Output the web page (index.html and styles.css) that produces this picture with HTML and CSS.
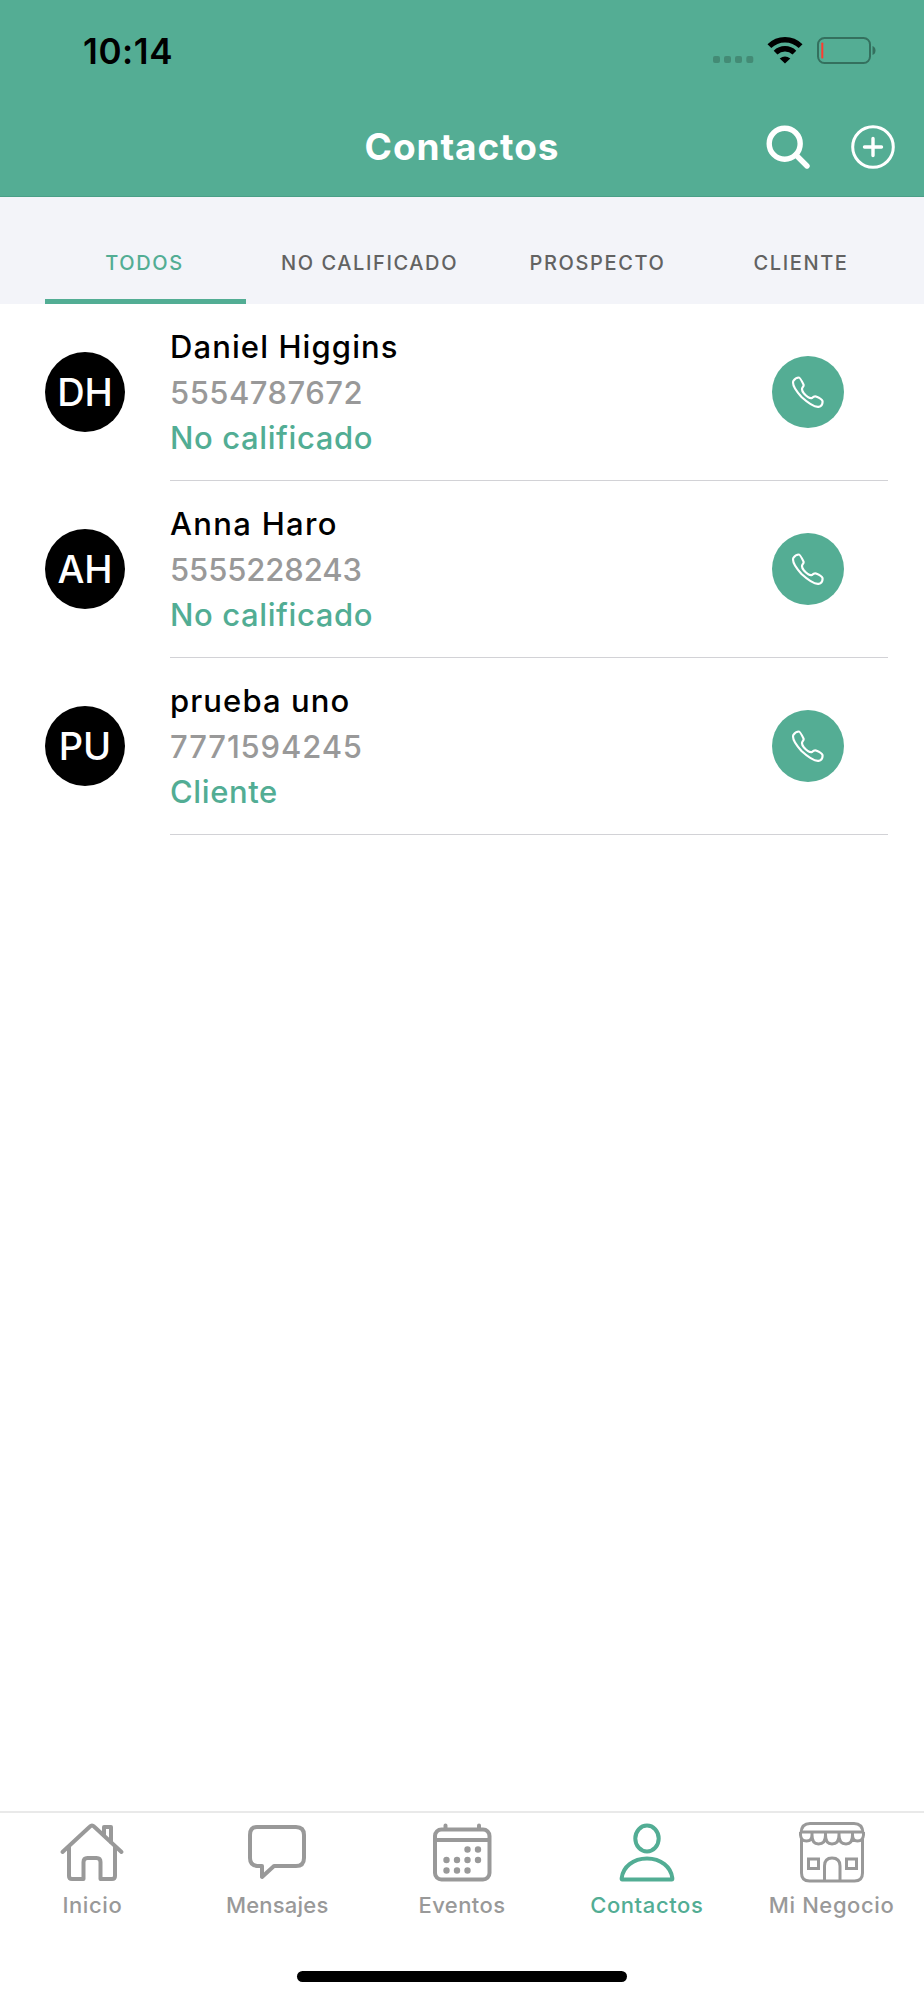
FILE: index.html
```
<!DOCTYPE html>
<html lang="es">
<head>
    <meta charset="UTF-8">
    <meta name="viewport" content="width=device-width, initial-scale=1.0">
    <title>Contactos</title>
    <link rel="stylesheet" href="styles.css">
</head>
<body>
    <header class="header">
        <div class="status-bar">
            <span class="time">10:14</span>
            <svg class="status-icons" width="168" height="32" viewBox="0 0 168 32">
                <g fill="#438b75">
                    <rect x="1" y="22" width="7" height="7" rx="2"/>
                    <rect x="12" y="22" width="7" height="7" rx="2"/>
                    <rect x="23" y="22" width="7" height="7" rx="2"/>
                    <rect x="34.300" y="22" width="7" height="7" rx="2"/>
                </g>
                <g fill="none" stroke="#000" stroke-width="5.400">
                    <path d="M57.400 12.200 A22 22 0 0 1 88.600 12.200"/>
                    <path d="M63.600 18.600 A13.500 13.500 0 0 1 82.400 18.600"/>
                </g>
                <path d="M67.700 24.600 Q73 20.500 78.300 24.600 L73 29.500Z"/>
                <rect x="106" y="4" width="52" height="25" rx="6.500" fill="none" stroke="#34705e" stroke-width="2"/>
                <rect x="109.300" y="8.500" width="2" height="16" rx="0.800" fill="#ff3b30"/>
                <path d="M160.500 12 Q163.500 13 163.500 16.500 Q163.500 20 160.500 21Z" fill="#34705e"/>
            </svg>
        </div>
        <div class="nav-bar">
            <h1 class="title">Contactos</h1>
            <div class="actions">
                <svg width="44" height="44" viewBox="0 0 44 44" fill="none" stroke="#fff" stroke-linecap="round">
                    <circle cx="18.700" cy="18.700" r="15.500" stroke-width="5.400"/>
                    <path d="M30 30 L41 41" stroke-width="5.400"/>
                </svg>
                <svg width="44" height="44" viewBox="0 0 44 44" fill="none" stroke="#fff" stroke-linecap="round">
                    <circle cx="22" cy="22" r="20.300" stroke-width="3"/>
                    <path d="M22 13.500 V30.500 M13.500 22 H30.500" stroke-width="3.400"/>
                </svg>
            </div>
        </div>
    </header>

    <nav class="tabs">
        <a class="tab active">TODOS</a>
        <a class="tab">NO CALIFICADO</a>
        <a class="tab">PROSPECTO</a>
        <a class="tab">CLIENTE</a>
    </nav>

    <main class="contacts">
        <div class="contact">
            <div class="avatar">DH</div>
            <div class="info">
                <div class="details">
                    <div class="name">Daniel Higgins</div>
                    <div class="phone">5554787672</div>
                    <div class="state">No calificado</div>
                </div>
                <a class="call"><svg width="34" height="34"><use href="#icon-phone"/></svg></a>
            </div>
        </div>
        <div class="contact">
            <div class="avatar">AH</div>
            <div class="info">
                <div class="details">
                    <div class="name name-anna">Anna Haro</div>
                    <div class="phone phone-anna">5555228243</div>
                    <div class="state">No calificado</div>
                </div>
                <a class="call"><svg width="34" height="34"><use href="#icon-phone"/></svg></a>
            </div>
        </div>
        <div class="contact">
            <div class="avatar">PU</div>
            <div class="info">
                <div class="details">
                    <div class="name">prueba uno</div>
                    <div class="phone phone-prueba">7771594245</div>
                    <div class="state">Cliente</div>
                </div>
                <a class="call"><svg width="34" height="34"><use href="#icon-phone"/></svg></a>
            </div>
        </div>
    </main>

    <footer class="bottom-bar">
        <a class="item">
            <svg width="66" height="62" viewBox="0 0 66 62" fill="none" stroke="#999" stroke-width="4" stroke-linecap="round" stroke-linejoin="round">
                <path d="M3.500 31 L31 5.500 Q33 3.500 35 5.500 L62.500 31"/>
                <path d="M45 14 V6 H52 V21"/>
                <path d="M10 26 V55 Q10 58 13 58 H24.500 V41 Q24.500 37 28.500 37 H37.500 Q41.500 37 41.500 41 V58 H53 Q56 58 56 55 V26"/>
            </svg>
            <span>Inicio</span>
        </a>
        <a class="item">
            <svg width="66" height="62" viewBox="0 0 66 62" fill="none" stroke="#999" stroke-width="4" stroke-linecap="round" stroke-linejoin="round">
                <path d="M13 6 H52 Q60 6 60 14 V37 Q60 45 52 45 H30 L18 56 V45 H13 Q6 44 6 37 V14 Q6 6 13 6Z"/>
            </svg>
            <span class="label-mensajes">Mensajes</span>
        </a>
        <a class="item">
            <svg width="66" height="62" viewBox="0 0 66 62" fill="none" stroke="#999" stroke-width="4" stroke-linecap="round">
                <rect x="6" y="8.500" width="54.500" height="50" rx="6.500"/>
                <path d="M6 19 H60 M16.500 8 V4.500 M50 8 V4.500"/>
                <path stroke-width="6.400" d="M38.500 28.500 h0 M49 28.500 h0 M17.500 39 h0 M28 39 h0 M38.500 39 h0 M49 39 h0 M17.500 49.500 h0 M28 49.500 h0 M38.500 49.500 h0"/>
            </svg>
            <span class="label-eventos">Eventos</span>
        </a>
        <a class="item active">
            <svg width="66" height="62" viewBox="0 0 66 62" fill="none" stroke="#52ad94" stroke-width="4" stroke-linejoin="round">
                <ellipse cx="33" cy="17.500" rx="11.700" ry="13"/>
                <path d="M8 58.500 Q7.500 58.500 7.700 57 C9 46 19 37.500 33 37.500 C47 37.500 57 46 58.300 57 Q58.500 58.500 58 58.500Z"/>
            </svg>
            <span>Contactos</span>
        </a>
        <a class="item">
            <svg width="66" height="62" viewBox="0 0 66 62" fill="none" stroke="#999" stroke-width="3">
                <path d="M2 12 Q2.500 2.500 11 2.500 H55 Q63.500 2.500 64 12"/>
                <path d="M1.500 11 H64.500"/>
                <path d="M1.500 11 V14 Q2 20 7.500 20 Q13 20 13 14 V11 M13 14 Q13 23 19.500 23 Q26.500 23 26.500 14 V11 M26.500 14 Q26.500 23 33 23 Q40 23 40 14 V11 M40 14 Q40 23 47 23 Q53.500 23 53.500 14 V11 M53.500 14 Q53.500 20 58.500 20 Q64 20 64.500 14 V11"/>
                <path d="M2.500 18 V52 Q2.500 60 10.500 60 H55.500 Q63.500 60 63.500 52 V18"/>
                <path d="M25.500 60 V45 Q25.500 37 33 37 Q41 37 41 45 V60"/>
                <rect x="9.500" y="38" width="10" height="9.500"/>
                <rect x="47.500" y="38" width="10" height="9.500"/>
            </svg>
            <span>Mi Negocio</span>
        </a>
        <div class="home-indicator"></div>
    </footer>

    <svg class="sprite" width="0" height="0">
        <symbol id="icon-phone" viewBox="0 0 34 34">
            <path d="M2.300 6 Q4.500 2.500 8 2.500 Q9 2.500 12.500 9.500 Q13 11 11.500 12.500 Q10 15 13 18.500 Q18 24 21 23 Q23 21 25 21.500 Q31 24 31.500 26 Q32 31 27.500 31.800 Q22 32.500 10.500 22 Q0.500 11 2.300 6Z" fill="none" stroke="#fff" stroke-width="2.200" stroke-linejoin="round"/>
        </symbol>
    </svg>
</body>
</html>
```
FILE: styles.css
```
* {
    box-sizing: border-box;
}
body {
    margin: 0;
    height: 2000px;
    display: flex;
    flex-direction: column;
    background-color: #fff;
    font-family: Inter, "Liberation Sans", sans-serif;
    font-weight: 500;
    overflow: hidden;
}
.sprite {
    position: absolute;
}

/* header */
.header {
    height: 197px;
    flex: none;
    background-color: #54ad94;
    border-bottom: 1px solid #4a9f87;
}
.status-bar {
    height: 98px;
    padding: 34px 44px 0 83px;
    display: flex;
    justify-content: space-between;
    align-items: flex-start;
}
.time {
    font-size: 35px;
    line-height: 34px;
    font-weight: 600;
    letter-spacing: 0.6px;
    color: #000;
}
.nav-bar {
    display: grid;
    grid-template-columns: 1fr auto 1fr;
    align-items: center;
    height: 98px;
    padding: 0 29px 0 29px;
}
.title {
    grid-column: 2;
    margin: 0;
    font-size: 37px;
    line-height: 44px;
    font-weight: 700;
    letter-spacing: 0.9px;
    color: #fff;
}
.actions {
    display: flex;
    justify-content: flex-end;
    gap: 41px;
}

/* tabs */
.tabs {
    height: 107px;
    flex: none;
    display: flex;
    padding: 0 24px 0 45px;
    background-color: #f3f4f9;
}
.tab {
    display: flex;
    justify-content: center;
    padding-top: 53px;
    width: 201px;
    font-size: 20px;
    line-height: 26px;
    letter-spacing: 1.6px;
    color: #626262;
    border-bottom: 5px solid transparent;
}
.tab:nth-child(2) {
    width: 247px;
}
.tab:nth-child(3) {
    width: 209px;
}
.tab:nth-child(4) {
    width: 198px;
}
.tab.active {
    padding-right: 2px;
    color: #52ad94;
    border-bottom-color: #52ad94;
}

/* contact list */
.contacts {
    flex: 1;
}
.contact {
    display: flex;
    height: 177px;
    padding: 0 36px 0 45px;
}
.avatar {
    width: 80px;
    height: 80px;
    margin: 48px 45px 0 0;
    border-radius: 50%;
    background-color: #000;
    color: #fff;
    font-size: 38px;
    line-height: 80px;
    text-align: center;
}
.info {
    flex: 1;
    display: flex;
    justify-content: space-between;
    border-bottom: 1px solid #d2d2d6;
}
.details {
    padding-top: 20px;
    font-size: 31px;
    line-height: 46px;
    white-space: nowrap;
}
.name {
    color: #000;
    letter-spacing: 1.1px;
}
.name-anna {
    letter-spacing: 1.3px;
}
.phone {
    color: #999;
    letter-spacing: 0.5px;
}
.phone-anna {
    letter-spacing: -0.1px;
}
.phone-prueba {
    letter-spacing: 0.85px;
}
.state {
    color: #52ad94;
    line-height: 44px;
    letter-spacing: 0.6px;
}
.call {
    display: flex;
    align-items: center;
    justify-content: center;
    width: 72px;
    height: 72px;
    margin: 52px 44px 0 0;
    border-radius: 50%;
    background-color: #54ad94;
}

/* bottom bar */
.bottom-bar {
    height: 189px;
    flex: none;
    display: grid;
    grid-template-columns: repeat(5, 1fr);
    grid-template-rows: 163px auto;
    border-top: 2px solid #e9e9e9;
}
.item {
    display: flex;
    flex-direction: column;
    align-items: center;
    padding-top: 8px;
    font-size: 22px;
    line-height: 28px;
    letter-spacing: 0.6px;
    color: #999;
    white-space: nowrap;
}
.item span {
    margin-top: 8px;
}
.item .label-mensajes {
    letter-spacing: 0.2px;
}
.item .label-eventos {
    letter-spacing: 0.4px;
}
.item.active {
    color: #52ad94;
}
.home-indicator {
    grid-column: 1 / -1;
    justify-self: center;
    width: 330px;
    height: 11px;
    margin-top: -5px;
    border-radius: 6px;
    background-color: #000;
}
```
